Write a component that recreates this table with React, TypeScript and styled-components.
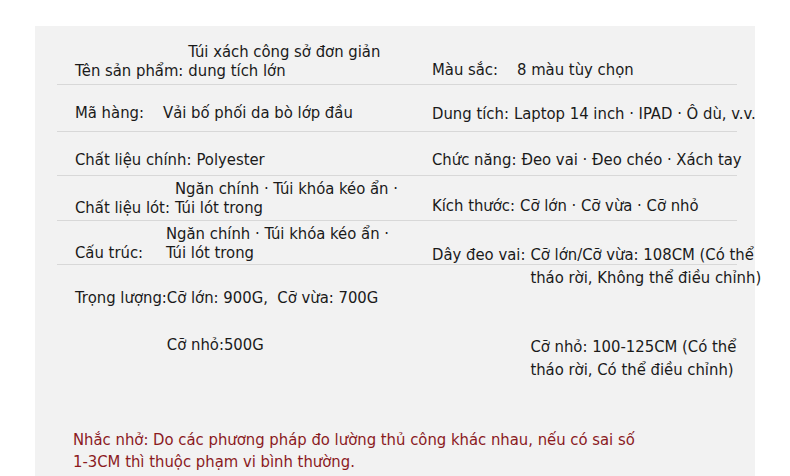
import { ReactNode } from 'react';
import styled, { createGlobalStyle } from 'styled-components';

const GlobalStyle = createGlobalStyle`
  html, body {
    margin: 0;
    padding: 0;
    background: #ffffff;
  }
  body {
    font-family: 'DejaVu Sans Condensed', 'Liberation Sans Narrow', 'Arial Narrow', sans-serif;
    color: #1a1a1a;
  }
`;

interface SpecItemProps {
  label: string;
  labelWidth?: number;
  children: ReactNode;
}

function SpecItem({ label, labelWidth, children }: SpecItemProps) {
  return (
    <Item>
      <Label $w={labelWidth}>{label}</Label>
      <Value>{children}</Value>
    </Item>
  );
}

export default function App() {
  return (
    <>
      <GlobalStyle />
      <Page>
        <Panel>
          <Table>
            <Row $h={45}>
              <Cell $pb={4}>
                <SpecItem label='Tên sản phẩm:'>
                  Túi xách công sở đơn giản
                  <br />
                  dung tích lớn
                </SpecItem>
              </Cell>
              <Cell $pb={5}>
                <SpecItem label='Màu sắc:' labelWidth={80}>
                  8 màu tùy chọn
                </SpecItem>
              </Cell>
            </Row>
            <Row $h={47}>
              <Cell $pb={9}>
                <SpecItem label='Mã hàng:' labelWidth={83}>
                  Vải bố phối da bò lớp đầu
                </SpecItem>
              </Cell>
              <Cell $pb={8}>
                <SpecItem label='Dung tích:'>Laptop 14 inch · IPAD · Ô dù, v.v.</SpecItem>
              </Cell>
            </Row>
            <Row $h={44}>
              <Cell $pb={6}>
                <SpecItem label='Chất liệu chính:'>Polyester</SpecItem>
              </Cell>
              <Cell $pb={6}>
                <SpecItem label='Chức năng:'>Đeo vai · Đeo chéo · Xách tay</SpecItem>
              </Cell>
            </Row>
            <Row $h={45}>
              <Cell $pb={3}>
                <SpecItem label='Chất liệu lót:'>
                  Ngăn chính · Túi khóa kéo ẩn ·
                  <br />
                  Túi lót trong
                </SpecItem>
              </Cell>
              <Cell $pb={5}>
                <SpecItem label='Kích thước:'>Cỡ lớn · Cỡ vừa · Cỡ nhỏ</SpecItem>
              </Cell>
            </Row>
            <Row $h={44}>
              <Cell $pb={2}>
                <SpecItem label='Cấu trúc:' labelWidth={86}>
                  Ngăn chính · Túi khóa kéo ẩn ·
                  <br />
                  Túi lót trong
                </SpecItem>
              </Cell>
              <Cell $top={22}>
                <Item $first>
                  <Label>Dây đeo vai:</Label>
                  <StrapValue>
                    <StrapPara>
                      Cỡ lớn/Cỡ vừa: 108CM (Có thể
                      <br />
                      tháo rời, Không thể điều chỉnh)
                    </StrapPara>
                    <StrapPara>
                      Cỡ nhỏ: 100-125CM (Có thể
                      <br />
                      tháo rời, Có thể điều chỉnh)
                    </StrapPara>
                  </StrapValue>
                </Item>
              </Cell>
            </Row>
          </Table>

          <Weight>
            <WeightLabel>Trọng lượng:</WeightLabel>
            <WeightList>
              <span>Cỡ lớn: 900G,  Cỡ vừa: 700G</span>
              <span>Cỡ nhỏ:500G</span>
            </WeightList>
          </Weight>

          <Note>
            Nhắc nhở: Do các phương pháp đo lường thủ công khác nhau, nếu có sai số
            <br />
            1-3CM thì thuộc phạm vi bình thường.
          </Note>
        </Panel>
      </Page>
    </>
  );
}

const Page = styled.div`
  width: 790px;
  height: 476px;
  overflow: hidden;
  padding: 26px 35px 0;
  box-sizing: border-box;
`;

const Panel = styled.div`
  width: 720px;
  height: 450px;
  box-sizing: border-box;
  background: #f2f2f2;
  padding: 14px 18px 3px 22px;
  display: flex;
  flex-direction: column;
  font-size: 16.5px;
`;

const Table = styled.div`
  display: flex;
  flex-direction: column;
`;

const Row = styled.div<{ $h: number }>`
  display: grid;
  grid-template-columns: 357px 323px;
  grid-template-rows: 100%;
  height: ${({ $h }) => $h}px;
  box-sizing: border-box;
  border-bottom: 1px solid #d8d8d8;
`;

const Cell = styled.div<{ $pb?: number; $top?: number }>`
  display: flex;
  flex-direction: column;
  justify-content: ${({ $top }) => ($top !== undefined ? 'flex-start' : 'flex-end')};
  padding: ${({ $top }) => $top ?? 0}px 0 ${({ $pb }) => $pb ?? 0}px 18px;
  min-width: 0;
  min-height: 0;
`;

const Item = styled.div<{ $first?: boolean }>`
  display: flex;
  align-items: ${({ $first }) => ($first ? 'first baseline' : 'last baseline')};
  line-height: 19px;
  white-space: nowrap;
`;

const Label = styled.span<{ $w?: number }>`
  flex: none;
  min-width: ${({ $w }) => ($w ? `${$w}px` : 'auto')};
  margin-right: 5px;
`;

const Value = styled.span`
  display: block;
`;

const StrapValue = styled.div`
  display: flex;
  flex-direction: column;
  gap: 46px;
  line-height: 23px;
`;

const StrapPara = styled.p`
  margin: 0;
`;

const Weight = styled.div`
  display: flex;
  margin: 23px 0 0 18px;
  line-height: 19px;
`;

const WeightLabel = styled.span`
  flex: none;
`;

const WeightList = styled.div`
  display: flex;
  flex-direction: column;
  gap: 28px;
  white-space: pre;
`;

const Note = styled.p`
  margin: auto 0 0 16px;
  color: #8b1a1e;
  line-height: 22px;
`;
